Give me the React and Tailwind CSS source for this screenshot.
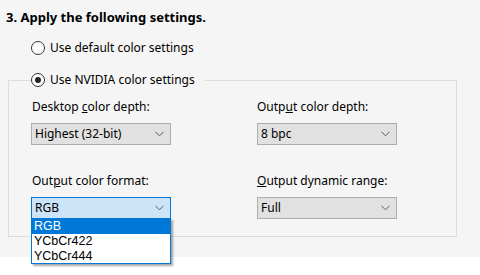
import React from "react";

const font = { fontFamily: '"Noto Sans", "Segoe UI", sans-serif' };
const listFont = { fontFamily: '"Liberation Sans", Arial, sans-serif' };

function Chevron() {
  return (
    <svg width="9" height="6" viewBox="0 0 9 6" className="shrink-0">
      <polyline points="0.5,0.8 4.5,4.8 8.5,0.8" fill="none" stroke="#5a5a5a" strokeWidth="1" />
    </svg>
  );
}

function Radio({ checked, label }) {
  return (
    <div className="flex items-center h-[16px]">
      <span className="w-[14px] h-[14px] rounded-full border border-[#333] bg-white flex items-center justify-center">
        {checked && <span className="w-[6px] h-[6px] rounded-full bg-[#222]" />}
      </span>
      <span className="ml-[5px] text-[12px] leading-[16px] text-black">{label}</span>
    </div>
  );
}

function Combo({ value, active, children }) {
  return (
    <div className="relative w-[140px]">
      <div
        className={
          "h-[22px] flex items-center justify-between pl-[3px] pr-[6px] text-[12px] text-black border " +
          (active ? "bg-[#cce4f7] border-[#0078d7]" : "bg-[#e1e1e1] border-[#adadad]")
        }
      >
        <span>{value}</span>
        <Chevron />
      </div>
      {children}
    </div>
  );
}

export default function App() {
  return (
    <div className="w-[480px] h-[275px] bg-white text-black" style={font}>
      <div className="bg-[#f5f5f5] h-[257px] pt-[9px]">
        <div className="pl-[6px] text-[13px] leading-[16px] font-bold">3. Apply the following settings.</div>
        <div className="pl-[31px] mt-[15px]">
          <Radio label="Use default color settings" />
        </div>
        <fieldset className="ml-[8px] mt-[16px] w-[449px] border border-[#dcdcdc] px-[22px] pb-[17px] pt-[11px]">
          <legend className="pr-[10px]">
            <Radio checked label="Use NVIDIA color settings" />
          </legend>
          <div className="grid grid-cols-[226px_1fr]">
            <div>
              <div className="text-[12px] leading-[16px] pl-[1px]">
                Desktop <span className="underline">c</span>olor depth:
              </div>
              <div className="mt-[8px]">
                <Combo value="Highest (32-bit)" />
              </div>
            </div>
            <div>
              <div className="text-[12px] leading-[16px]">
                Outp<span className="underline">u</span>t color depth:
              </div>
              <div className="mt-[8px]">
                <Combo value="8 bpc" />
              </div>
            </div>
            <div className="mt-[28px]">
              <div className="text-[12px] leading-[16px] pl-[1px]">
                Out<span className="underline">p</span>ut color format:
              </div>
              <div className="mt-[8px]">
                <Combo value="RGB" active>
                  <div
                    className="absolute left-0 top-[21px] w-[140px] bg-white border border-[#0078d7] shadow-[2px_2px_2px_rgba(0,0,0,0.35)] z-10 text-[12.5px]"
                    style={listFont}
                  >
                    <div className="bg-[#0078d7] text-white pl-[2px] h-[15px] leading-[15px]">RGB</div>
                    <div className="pl-[2px] h-[15px] leading-[15px]">YCbCr422</div>
                    <div className="pl-[2px] h-[14px] leading-[14px]">YCbCr444</div>
                  </div>
                </Combo>
              </div>
            </div>
            <div className="mt-[28px]">
              <div className="text-[12px] leading-[16px]">
                <span className="underline">O</span>utput dynamic range:
              </div>
              <div className="mt-[8px]">
                <Combo value="Full" />
              </div>
            </div>
          </div>
        </fieldset>
      </div>
    </div>
  );
}
